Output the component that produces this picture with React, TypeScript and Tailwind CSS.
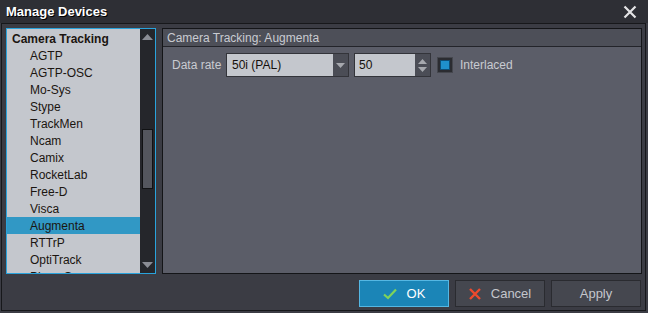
const items = [
  "AGTP",
  "AGTP-OSC",
  "Mo-Sys",
  "Stype",
  "TrackMen",
  "Ncam",
  "Camix",
  "RocketLab",
  "Free-D",
  "Visca",
  "Augmenta",
  "RTTrP",
  "OptiTrack",
  "PhaseSpace",
]

const font = { fontFamily: '"Liberation Sans", Arial, sans-serif' }

const Triangle = ({ up }: { up?: boolean }) => (
  <svg width="11" height="6" viewBox="0 0 11 6">
    <path d={up ? "M0 6 L5.5 0 L11 6 Z" : "M0 0 L11 0 L5.5 6 Z"} fill="#8a8c94" />
  </svg>
)

const App = () => {
  return (
    <div className="w-[648px] h-[313px] bg-[#3b3c44] flex flex-col text-[12px] overflow-hidden" style={font}>
      {/* title bar */}
      <div className="h-[23px] bg-[#2e2f35] flex items-center justify-between pl-[6px] pr-[11px] shrink-0">
        <div className="font-bold text-[13px] text-white [text-shadow:1px_1px_0_#000]">Manage Devices</div>
        <svg width="14" height="14" viewBox="0 0 14 14">
          <path d="M1.5 1.5 L12.5 12.5 M12.5 1.5 L1.5 12.5" stroke="#e4e4e6" strokeWidth="2.2" />
        </svg>
      </div>

      <div className="flex-1 ml-[1px] mr-[2px] mb-[2px] border border-[#17181b] flex flex-col pl-[4px] pr-[3px] pt-[4px]">
        <div className="flex gap-[6px] h-[246px]">
          {/* device list */}
          <div className="w-[150px] border border-[#29a3dc] flex">
            <div className="flex-1 bg-[#c4c7cd] overflow-hidden text-[#1b1510]">
              <div className="h-[17px] pl-[5px] flex items-center font-bold mt-[1px]">Camera Tracking</div>
              {items.map((it) => (
                <div
                  key={it}
                  className={`h-[17px] pl-[23px] flex items-center ${it === "Augmenta" ? "bg-[#3198c5]" : ""}`}
                >
                  {it}
                </div>
              ))}
            </div>
            <div className="w-[15px] bg-[#25262b] flex flex-col items-center pt-[5px] pb-[5px]">
              <Triangle up />
              <div className="mt-[89px] w-[11px] h-[60px] bg-[#54565e] border border-[#111214]" />
              <div className="flex-1" />
              <Triangle />
            </div>
          </div>

          {/* settings panel */}
          <div className="w-[480px] border border-[#141518] bg-[#5b5d68] flex flex-col">
            <div className="h-[18px] bg-[#4d4f58] border-b border-[#23242a] flex items-center pl-[4px] text-[#c9cbd1]">
              Camera Tracking: Augmenta
            </div>
            <div className="flex items-center pt-[6px] pl-[9px]">
              <div className="w-[54px] text-[#c9cbd1]">Data rate</div>
              <div className="w-[123px] h-[24px] border border-[#33343a] flex">
                <div className="flex-1 bg-[#c4c7cd] flex items-center pl-[5px] text-[#15100c]">50i (PAL)</div>
                <div className="w-[15px] bg-[#4b4d56] flex items-center justify-center">
                  <svg width="9" height="5" viewBox="0 0 9 5">
                    <path d="M0 0 L9 0 L4.5 5 Z" fill="#a6a8ae" />
                  </svg>
                </div>
              </div>
              <div className="ml-[5px] w-[77px] h-[24px] border border-[#33343a] flex">
                <div className="flex-1 bg-[#c4c7cd] flex items-center pl-[4px] text-[#15100c]">50</div>
                <div className="w-[15px] bg-[#4b4d56] flex flex-col items-center justify-center gap-[3px]">
                  <svg width="9" height="5" viewBox="0 0 9 5">
                    <path d="M0 5 L4.5 0 L9 5 Z" fill="#a6a8ae" />
                  </svg>
                  <svg width="9" height="5" viewBox="0 0 9 5">
                    <path d="M0 0 L9 0 L4.5 5 Z" fill="#a6a8ae" />
                  </svg>
                </div>
              </div>
              <div className="ml-[6px] w-[16px] h-[16px] bg-[#2b2c31] border border-[#45474e] flex items-center justify-center">
                <div className="w-[10px] h-[10px] bg-[#1f90cc] border border-[#0d4f78]" />
              </div>
              <div className="ml-[7px] text-[#c9cbd1]">Interlaced</div>
            </div>
          </div>
        </div>

        {/* buttons */}
        <div className="flex justify-end gap-[6px] mt-[6px] pr-[1px]">
          <div className="w-[90px] h-[27px] bg-[#1b85b7] border border-[#55b7e3] flex items-center justify-center gap-[10px] text-white text-[13px]">
            <svg width="14" height="12" viewBox="0 0 14 12">
              <path d="M1 6.5 L5 10 L13 1.5" stroke="#7fd35a" strokeWidth="2.2" fill="none" />
            </svg>
            <span>OK</span>
          </div>
          <div className="w-[90px] h-[27px] bg-[#45474f] border border-[#2a2b30] flex items-center justify-center gap-[10px] text-[#c4c6cc] text-[13px]">
            <svg width="12" height="12" viewBox="0 0 12 12">
              <path d="M1 1 L11 11 M11 1 L1 11" stroke="#ee4a2e" strokeWidth="2.4" />
            </svg>
            <span>Cancel</span>
          </div>
          <div className="w-[90px] h-[27px] bg-[#45474f] border border-[#2a2b30] flex items-center justify-center text-[#c4c6cc] text-[13px]">
            Apply
          </div>
        </div>
      </div>
    </div>
  )
}

export default App
